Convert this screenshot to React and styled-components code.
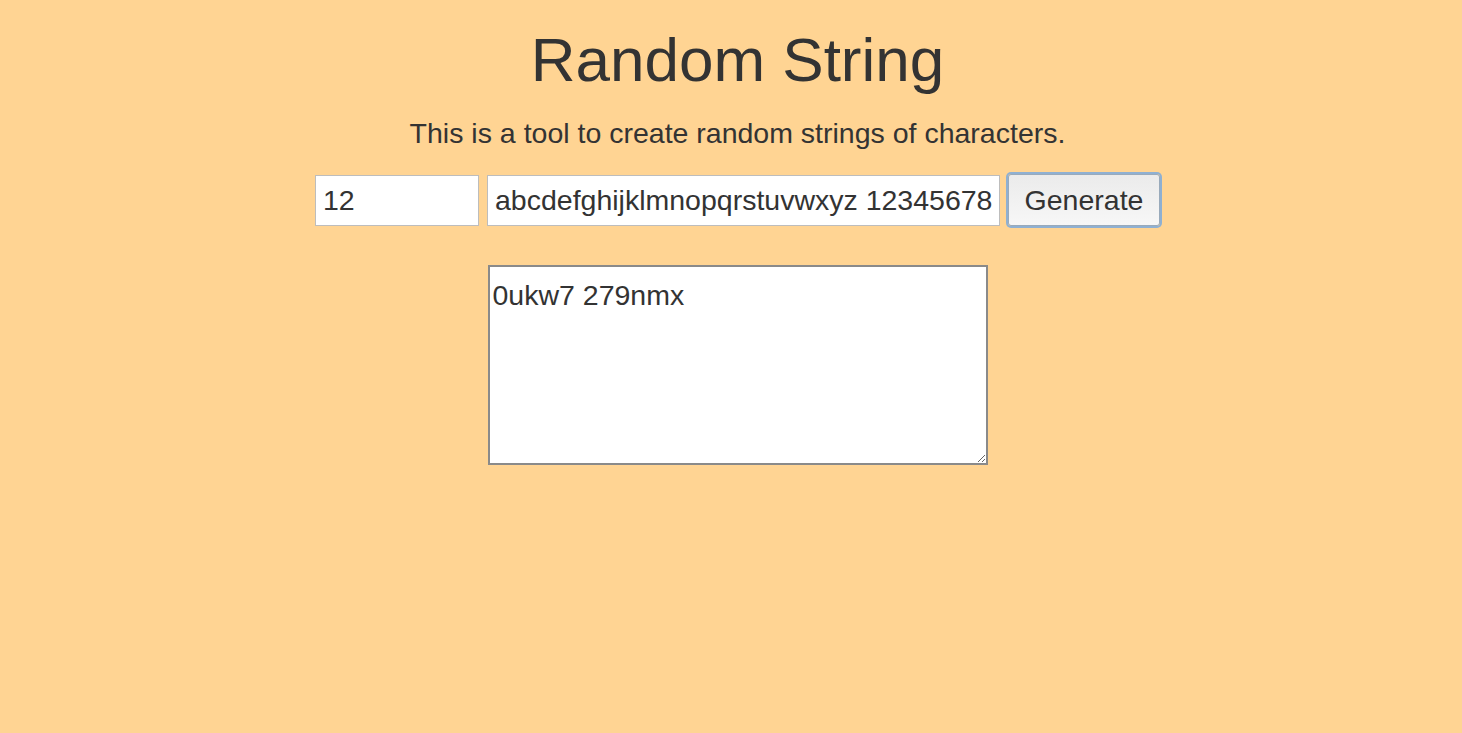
import styled, { createGlobalStyle } from 'styled-components';

const GlobalStyle = createGlobalStyle`
  html, body {
    margin: 0;
    background-color: #ffd493;
  }
  body {
    font-family: "Liberation Sans", Arial, sans-serif;
    color: #333;
  }
`;

export default function App() {
  return (
    <>
      <GlobalStyle />
      <PageStyle>
        <Title>Random String</Title>
        <Lead>This is a tool to create random strings of characters.</Lead>
        <FormRow>
          <TextInput $width={164} type="text" defaultValue="12" />
          <TextInput
            $width={513}
            type="text"
            defaultValue="abcdefghijklmnopqrstuvwxyz 1234567890"
          />
          <GenerateButton>Generate</GenerateButton>
        </FormRow>
        <Output defaultValue="0ukw7 279nmx" />
      </PageStyle>
    </>
  );
}

const PageStyle = styled.div`
  display: flex;
  flex-direction: column;
  align-items: center;
  padding-left: 13px;
  min-height: 733px;
  box-sizing: border-box;
`;

const Title = styled.h1`
  margin: 22px 0 0;
  font-size: 62px;
  font-weight: 400;
  line-height: 76px;
`;

const Lead = styled.p`
  margin: 18px 0 0;
  font-size: 28.5px;
  line-height: 34px;
`;

const FormRow = styled.div`
  display: flex;
  align-items: center;
  gap: 8px;
  margin-top: 24px;
`;

const TextInput = styled.input`
  width: ${(p) => p.$width}px;
  height: 51px;
  box-sizing: border-box;
  padding: 0 7px;
  border: 1px solid #bdbdbd;
  box-shadow: inset 0 0 0 1px #fff;
  background: #fff;
  font-family: "Liberation Sans", Arial, sans-serif;
  font-size: 28.5px;
  color: #333;
  outline: none;
`;

const GenerateButton = styled.button`
  width: 152px;
  height: 52px;
  box-sizing: border-box;
  padding: 0;
  border: 1px solid #9ab;
  border-radius: 3px;
  box-shadow: 0 0 0 2px #8fb0d2;
  background: linear-gradient(#ebebeb, #f7f7f7);
  font-family: "Liberation Sans", Arial, sans-serif;
  font-size: 28.5px;
  color: #333;
  cursor: pointer;
`;

const Output = styled.textarea`
  width: 500px;
  height: 200px;
  box-sizing: border-box;
  margin-top: 39px;
  padding: 12px 3px;
  border: 2px solid #8a8a8a;
  background: #fff;
  font-family: "Liberation Sans", Arial, sans-serif;
  font-size: 28.5px;
  line-height: 32px;
  color: #333;
  resize: both;
  outline: none;
`;
